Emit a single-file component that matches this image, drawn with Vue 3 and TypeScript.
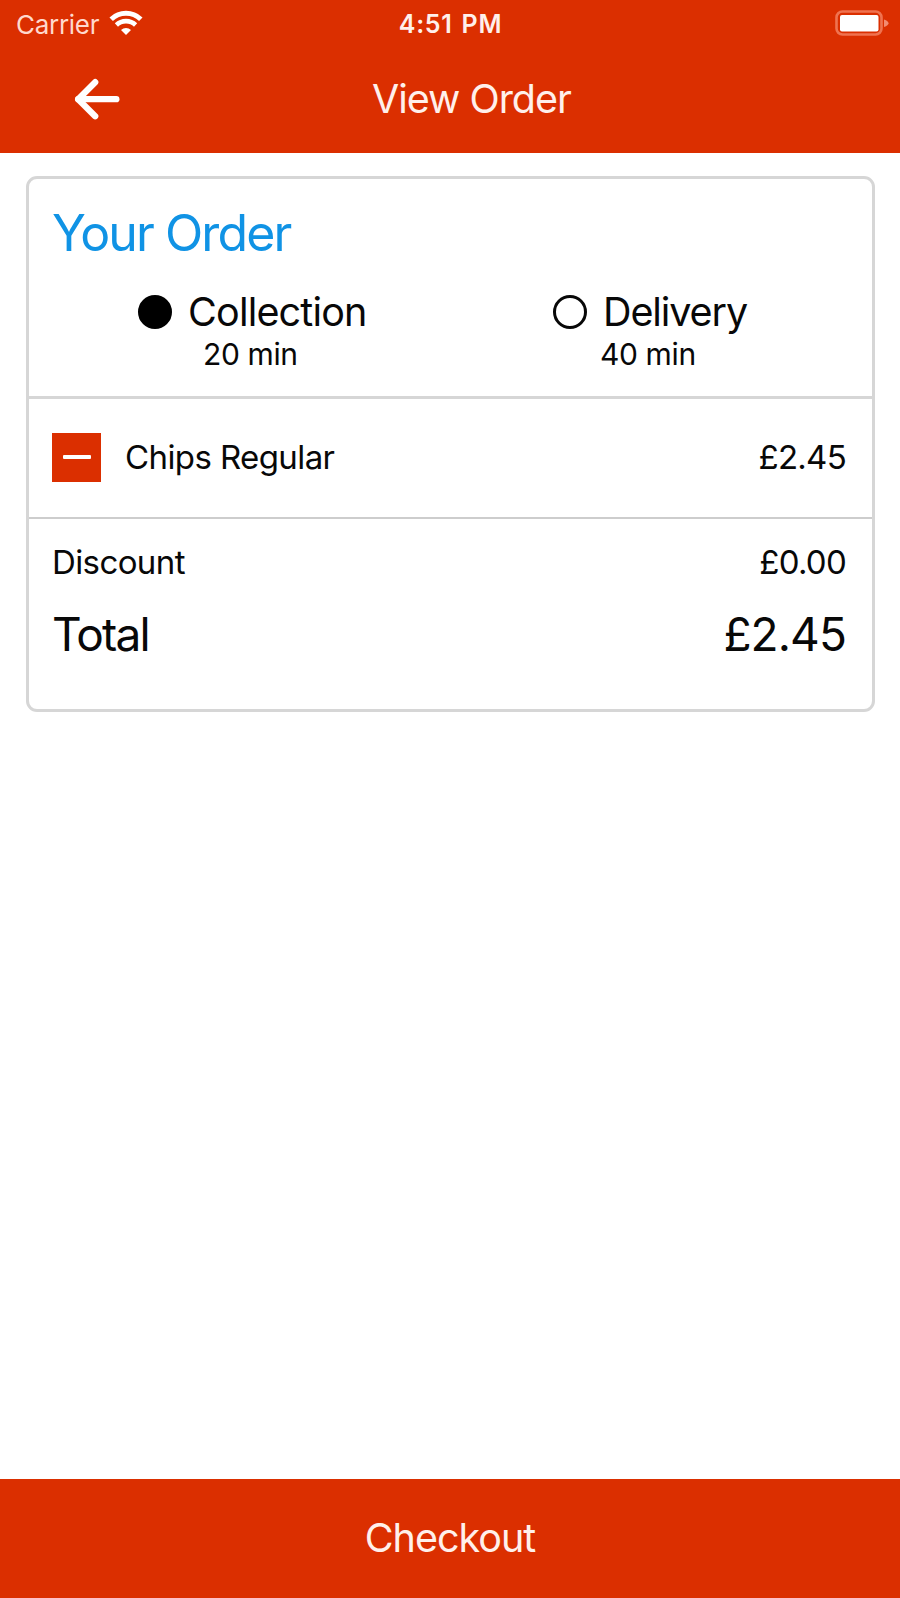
<script setup lang="ts">
import { ref } from 'vue'

interface Option {
  id: string
  label: string
  wait: string
}

interface Item {
  name: string
  price: string
}

const options: Option[] = [
  { id: 'collection', label: 'Collection', wait: '20 min' },
  { id: 'delivery', label: 'Delivery', wait: '40 min' },
]
const selected = ref<string>('collection')
const items = ref<Item[]>([{ name: 'Chips Regular', price: '£2.45' }])
</script>

<template>
  <div class="screen">
    <header class="header">
      <div class="status">
        <div class="network">
          <span class="carrier">Carrier</span>
          <svg class="wifi" width="34" height="26" viewBox="0 0 34 26" fill="none" stroke="#fff">
            <path d="M2.2 9.200A21.500 21.500 0 0 1 31.800 9.200" stroke-width="5" />
            <path d="M7.400 15A13.800 13.800 0 0 1 26.600 15" stroke-width="4.600" />
            <path d="M12 20A7.500 7.500 0 0 1 22 20L17 25Z" fill="#fff" stroke="none" />
          </svg>
        </div>
        <span class="clock">4:51 PM</span>
        <div class="power">
          <svg width="54" height="27" viewBox="0 0 54 27">
            <rect x="1.500" y="1.500" width="45" height="23" rx="6" fill="none" stroke="#ef7350" stroke-width="2.600" />
            <rect x="5" y="5" width="38.500" height="16.500" rx="2" fill="#fff" />
            <path d="M49 9.500Q53.500 11 53.500 13.200T49 17Z" fill="#f28b70" />
          </svg>
        </div>
      </div>
      <div class="nav">
        <button class="back" aria-label="Back">
          <svg width="48" height="44" viewBox="0 0 48 44" fill="none" stroke="#fff" stroke-width="6.300">
            <path d="M44.300 22.200H6.200" stroke-linecap="round" />
            <path d="M23.200 5.200L6.200 22.200L23.200 39.200" stroke-linecap="round" stroke-linejoin="round" />
          </svg>
        </button>
        <h1 class="title">View Order</h1>
      </div>
    </header>

    <main class="card">
      <section class="summary">
        <h2 class="heading">Your Order</h2>
        <div class="options">
          <div v-for="o in options" :key="o.id" class="option" :class="o.id" @click="selected = o.id">
            <div class="choice">
              <span class="radio" :class="{ on: selected === o.id }"></span>
              <span class="label">{{ o.label }}</span>
            </div>
            <span class="wait">{{ o.wait }}</span>
          </div>
        </div>
      </section>
      <section v-for="item in items" :key="item.name" class="item">
        <button class="remove" aria-label="Remove"><span class="minus"></span></button>
        <span class="name">{{ item.name }}</span>
        <span class="price">{{ item.price }}</span>
      </section>
      <section class="totals">
        <div class="line discount">
          <span class="discount-label">Discount</span>
          <span class="price">£0.00</span>
        </div>
        <div class="line total">
          <span class="total-label">Total</span>
          <span class="total-price">£2.45</span>
        </div>
      </section>
    </main>

    <button class="checkout"><span class="checkout-label">Checkout</span></button>
  </div>
</template>

<style>
body {
  margin: 0;
  background: #fff;
}
</style>

<style scoped>
.screen {
  box-sizing: border-box;
  width: 900px;
  height: 1598px;
  display: flex;
  flex-direction: column;
  overflow: hidden;
  font-family: Inter, Roboto, sans-serif;
  color: #080808;
  background: #fff;
  white-space: nowrap;
}
button {
  border: 0;
  padding: 0;
  font: inherit;
}
.header {
  height: 153px;
  flex: none;
  background: #db2f00;
  color: #fff0eb;
}
.status {
  display: grid;
  grid-template-columns: 1fr auto 1fr;
  height: 48px;
  align-items: center;
  padding: 0 11px 0 16px;
}
.network {
  display: flex;
  align-items: center;
}
.carrier {
  font-size: 26px;
  letter-spacing: -0.3px;
  width: 93px;
  color: #ffd9cd;
}
.wifi {
  margin-top: -2px;
}
.clock {
  font-size: 25px;
  font-weight: 600;
  letter-spacing: 0.7px;
  word-spacing: 2px;
  margin-left: -4px;
}
.power {
  display: flex;
  justify-content: flex-end;
  margin-top: -1px;
}
.nav {
  display: grid;
  grid-template-columns: 72px 48px 1fr;
  height: 101px;
  align-items: center;
}
.back {
  grid-column: 2;
  height: 44px;
  background: none;
}
.back svg {
  display: block;
}
.title {
  margin: 0;
  padding-left: 252px;
  font-size: 39.5px;
  letter-spacing: -1.02px;
  font-weight: 400;
  line-height: 48px;
}
.card {
  box-sizing: border-box;
  width: 849px;
  height: 536px;
  margin: 23px 0 0 26px;
  border: 3px solid #d6d6d6;
  border-radius: 11px;
  display: flex;
  flex-direction: column;
}
.summary {
  box-sizing: border-box;
  height: 220px;
  border-bottom: 3px solid #d6d6d6;
}
.heading {
  margin: 24px 0 0 23px;
  font-size: 50px;
  letter-spacing: -1.9px;
  line-height: 60px;
  font-weight: 400;
  color: #1093e5;
}
.options {
  display: grid;
  grid-template-columns: 415px 1fr;
  margin-top: 24px;
}
.option {
  display: flex;
  flex-direction: column;
}
.choice {
  display: flex;
  align-items: center;
  gap: 16px;
  height: 50px;
  padding-left: 109px;
}
.radio {
  box-sizing: border-box;
  width: 34px;
  height: 34px;
  border: 3px solid #080808;
  border-radius: 50%;
}
.radio.on {
  background: #000;
  border-color: #000;
}
.label {
  font-size: 39.5px;
  letter-spacing: -0.82px;
}
.delivery .label {
  letter-spacing: -1.1px;
}
.wait {
  font-size: 30px;
  letter-spacing: -0.38px;
  line-height: 34px;
  padding-left: 174px;
}
.delivery .wait {
  padding-left: 156px;
}
.item {
  box-sizing: border-box;
  height: 120px;
  display: flex;
  align-items: center;
  border-bottom: 2px solid #cdcdcd;
  padding: 0 26px 2px 23px;
}
.remove {
  display: flex;
  align-items: center;
  justify-content: center;
  width: 49px;
  height: 49px;
  background: #db2f00;
}
.minus {
  width: 28px;
  height: 4px;
  border-radius: 1px;
  background: #fff;
}
.name {
  margin-left: 24px;
  font-size: 33px;
  letter-spacing: -0.6px;
}
.price {
  margin-left: auto;
  font-size: 33px;
  letter-spacing: -0.75px;
}
.line {
  display: flex;
  justify-content: space-between;
  align-items: center;
  padding: 0 26px 0 23px;
}
.discount {
  height: 48px;
  margin-top: 19px;
}
.discount-label {
  font-size: 33px;
  letter-spacing: -0.6px;
}
.total {
  height: 60px;
  margin-top: 18px;
}
.total-label {
  font-size: 46px;
  letter-spacing: -1.8px;
}
.total-price {
  font-size: 46px;
  letter-spacing: -0.9px;
}
.checkout {
  box-sizing: border-box;
  height: 119px;
  flex: none;
  margin-top: auto;
  padding-bottom: 2px;
  background: #db2f00;
  color: #fff0eb;
  font-size: 39.5px;
  letter-spacing: -1px;
}
</style>
